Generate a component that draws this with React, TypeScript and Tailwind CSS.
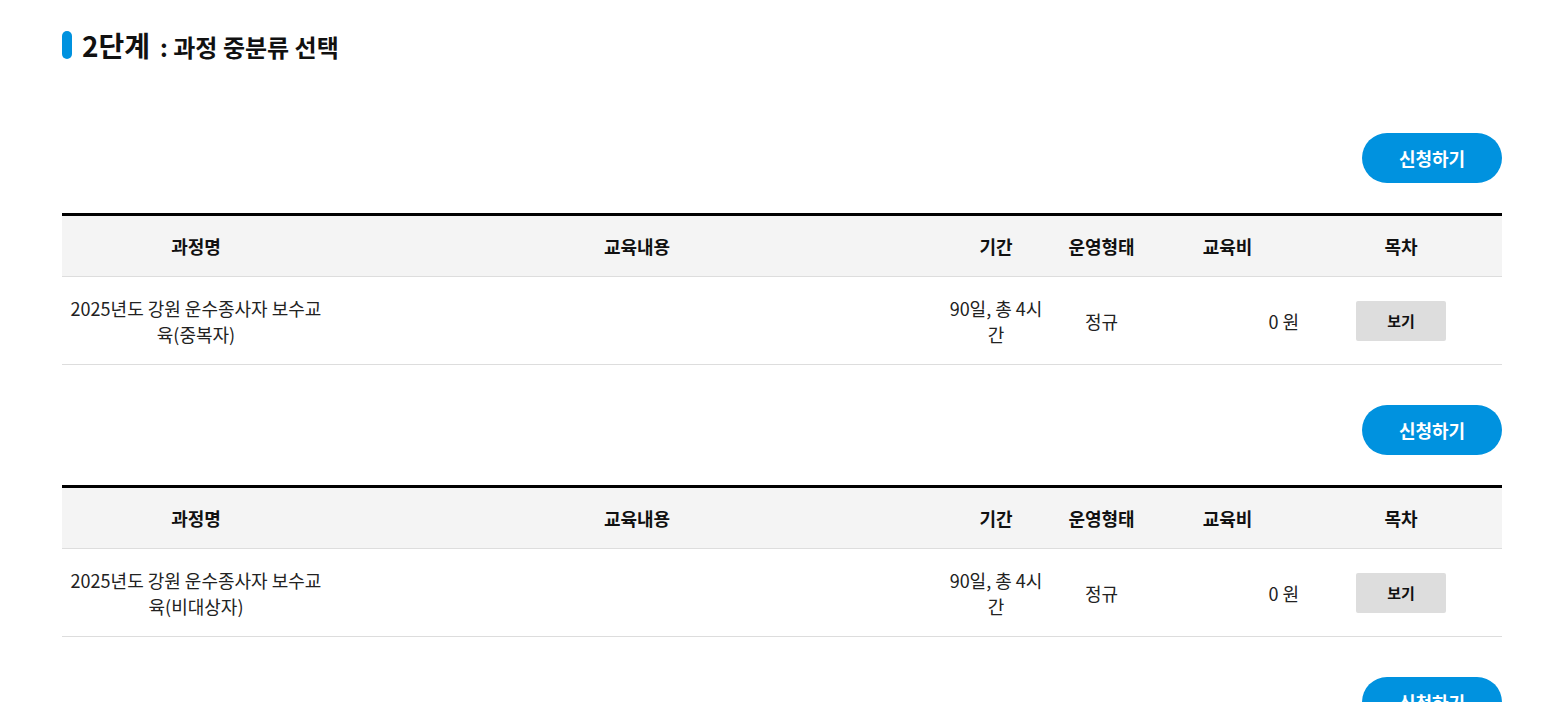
import React from "react";

const rows = [
  { name: "2025년도 강원 운수종사자 보수교육(중복자)" },
  { name: "2025년도 강원 운수종사자 보수교육(비대상자)" },
  { name: "2025년도 강원 운수종사자 보수교육(신규자)" },
];

const cols = "grid grid-cols-[268px_614px_104px_107px_145px_202px]";

function Block({ name }: { name: string }) {
  return (
    <div>
      <div className="flex justify-end">
        <button className="w-[140px] h-[50px] rounded-full bg-[#0092df] text-white font-bold text-[18px]">
          신청하기
        </button>
      </div>
      <div className="mt-[30px] border-t-[3px] border-black">
        <div className={`${cols} bg-[#f4f4f4] h-[61px] border-b border-[#dddddd] text-[18px] font-bold text-[#111] items-center text-center`}>
          <div>과정명</div>
          <div>교육내용</div>
          <div>기간</div>
          <div>운영형태</div>
          <div>교육비</div>
          <div>목차</div>
        </div>
        <div className={`${cols} h-[88px] border-b border-[#dddddd] text-[18px] text-[#222] leading-[26px] items-center`}>
          <div className="text-center px-[5px]">{name}</div>
          <div></div>
          <div className="text-center px-[3px]">90일, 총 4시간</div>
          <div className="text-center">정규</div>
          <div className="text-right pr-[1px]">0 원</div>
          <div className="flex justify-center">
            <button className="w-[90px] h-[40px] bg-[#dddddd] rounded-[2px] font-bold text-[15px] text-[#111]">
              보기
            </button>
          </div>
        </div>
      </div>
    </div>
  );
}

export default function App() {
  return (
    <div
      className="bg-white min-h-screen pt-[29px]"
      style={{ fontFamily: '"Noto Sans CJK KR", "Noto Sans", sans-serif' }}
    >
      <div className="ml-[62px] w-[1440px]">
        <div className="flex items-center gap-[10px] h-[32px]">
          <span className="w-[10px] h-[28px] rounded-full bg-[#0092df]" />
          <h2 className="font-bold text-[#111] flex items-baseline">
            <span className="text-[28px]">2단계</span>
            <span className="text-[24px] ml-[10px]">: 과정 중분류 선택</span>
          </h2>
        </div>
        <div className="mt-[72px] flex flex-col gap-[40px]">
          {rows.map((r, i) => (
            <Block key={i} name={r.name} />
          ))}
        </div>
      </div>
    </div>
  );
}
